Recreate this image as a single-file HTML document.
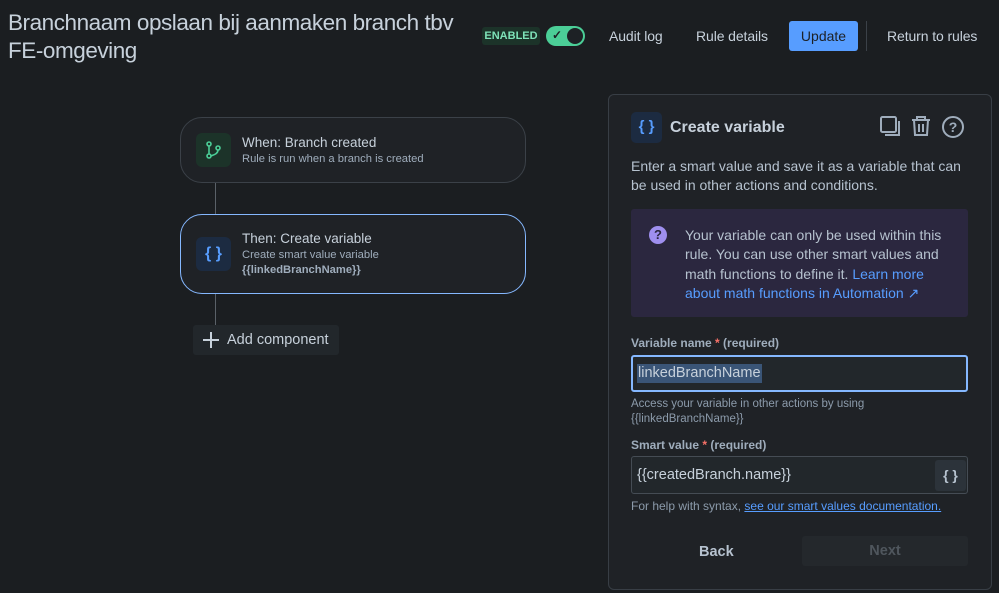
<!DOCTYPE html>
<html><head><style>
*{margin:0;padding:0;box-sizing:border-box}
body{width:999px;height:593px;background:#1b1e21;font-family:"Liberation Sans",sans-serif;color:#c7d1db;position:relative;overflow:hidden}
.a{position:absolute}
.title{left:8px;top:9px;font-size:22.5px;letter-spacing:-0.45px;line-height:28px;color:#c7d1db;width:475px}
.nav{font-size:14px;color:#c7d1db;top:28px;letter-spacing:-0.1px}
.card{background:#1f2226;border:1px solid #3b4148;border-radius:22px}
.t1{font-size:13.5px;color:#c7d1db}
.t2{font-size:11.2px;color:#9fadbc}
.lbl{font-size:12px;font-weight:bold;color:#9fadbc}
.req{color:#f87168}
</style></head><body>
<div class="a title">Branchnaam opslaan bij aanmaken branch tbv FE-omgeving</div>
<div class="a" style="left:482px;top:27px;width:58px;height:18px;background:#1c3329;border-radius:3px;color:#7ee2b8;font-size:11px;font-weight:bold;line-height:18px;text-align:center">ENABLED</div>
<div class="a" style="left:546px;top:26px;width:39px;height:20px;background:#4bce97;border-radius:10px">
<span class="a" style="left:6px;top:2px;font-size:12px;color:#1d2125;font-weight:bold">✓</span>
<span class="a" style="left:21px;top:2px;width:16px;height:16px;border-radius:50%;background:#1d2125"></span></div>
<div class="a nav" style="left:609px">Audit log</div>
<div class="a nav" style="left:696px">Rule details</div>
<div class="a" style="left:789px;top:21px;width:69px;height:30px;background:#579dff;border-radius:3px;color:#1d2125;font-size:14px;line-height:30px;text-align:center">Update</div>
<div class="a" style="left:866px;top:21px;width:1px;height:30px;background:#3b4148"></div>
<div class="a nav" style="left:887px">Return to rules</div>

<div class="a card" style="left:180px;top:117px;width:346px;height:66px"></div>
<div class="a" style="left:196px;top:133px;width:35px;height:34px;background:#1c3329;border-radius:6px">
<svg width="35" height="34" viewBox="0 0 35 34"><g stroke="#4bce97" stroke-width="1.6" fill="none"><circle cx="13" cy="11" r="2"/><circle cx="13" cy="23" r="2"/><circle cx="22" cy="15" r="2"/><path d="M13 13v8M22 17c0 4-5 5-7 6"/></g></svg></div>
<div class="a t1" style="left:242px;top:135px">When: Branch created</div>
<div class="a t2" style="left:242px;top:153px">Rule is run when a branch is created</div>
<div class="a" style="left:215px;top:183px;width:1px;height:31px;background:#5a6168"></div>
<div class="a card" style="left:180px;top:214px;width:346px;height:80px;border:1.5px solid #85b8ff"></div>
<div class="a" style="left:196px;top:237px;width:35px;height:34px;background:#1c2b41;border-radius:6px;color:#579dff;font-size:16px;font-weight:bold;line-height:33px;text-align:center">{ }</div>
<div class="a t1" style="left:242px;top:231px">Then: Create variable</div>
<div class="a t2" style="left:242px;top:249px">Create smart value variable</div>
<div class="a t2" style="left:242px;top:264px;font-weight:bold">{{linkedBranchName}}</div>
<div class="a" style="left:215px;top:294px;width:1px;height:31px;background:#5a6168"></div>
<div class="a" style="left:193px;top:325px;width:146px;height:30px;background:#22272b;border-radius:3px;font-size:14.5px;line-height:30px;color:#c7d1db;padding-left:34px">Add component</div>
<div class="a" style="left:203px;top:339px;width:16px;height:1.6px;background:#c7d1db"></div>
<div class="a" style="left:210px;top:332px;width:1.6px;height:16px;background:#c7d1db"></div>

<div class="a" style="left:608px;top:94px;width:384px;height:496px;background:#1f2226;border:1px solid #383e45;border-radius:6px"></div>
<div class="a" style="left:631px;top:112px;width:31px;height:31px;background:#1c2b41;border-radius:5px;color:#579dff;font-size:15px;font-weight:bold;line-height:30px;text-align:center">{ }</div>
<div class="a" style="left:670px;top:119px;font-size:16px;font-weight:bold;color:#c7d1db">Create variable</div>
<svg class="a" style="left:878px;top:113px" width="90" height="28" viewBox="0 0 90 28"><g stroke="#9fadbc" stroke-width="2" fill="none"><rect x="3" y="4" width="15" height="15" rx="1.5"/><path d="M21 8v14H7"/><path d="M34 7h18M39 7V4h8v3M36 7l1 15h12l1-15M41 11v8M45 11v8"/><circle cx="75" cy="14" r="10"/></g><text x="75" y="19" font-size="14" font-weight="bold" fill="#9fadbc" text-anchor="middle" font-family="Liberation Sans">?</text></svg>
<div class="a" style="left:631px;top:157px;width:340px;font-size:14px;line-height:19px;color:#b6c2cf">Enter a smart value and save it as a variable that can be used in other actions and conditions.</div>
<div class="a" style="left:631px;top:209px;width:337px;height:108px;background:#2b273f;border-radius:3px"></div>
<div class="a" style="left:649px;top:226px;width:18px;height:18px;border-radius:50%;background:#9f8fef;color:#2b273f;font-size:13px;font-weight:bold;text-align:center;line-height:18px">?</div>
<div class="a" style="left:685px;top:226px;width:275px;font-size:14px;line-height:19.3px;color:#b6c2cf">Your variable can only be used within this rule. You can use other smart values and math functions to define it. <span style="color:#579dff">Learn more about math functions in Automation ↗</span></div>
<div class="a lbl" style="left:631px;top:336px">Variable name <span class="req">*</span> (required)</div>
<div class="a" style="left:631px;top:355px;width:337px;height:37px;border:2px solid #85b8ff;border-radius:3px;background:#22272b"></div>
<div class="a" style="left:637px;top:364px;background:#3a5577;font-size:14.5px;color:#c7d1db;padding:0 1px;line-height:19px">linkedBranchName</div>
<div class="a" style="left:631px;top:397px;font-size:11.5px;line-height:15px;color:#8c9bab">Access your variable in other actions by using<br>{{linkedBranchName}}</div>
<div class="a lbl" style="left:631px;top:438px">Smart value <span class="req">*</span> (required)</div>
<div class="a" style="left:631px;top:456px;width:337px;height:38px;border:1px solid #454c54;border-radius:3px;background:#22272b"></div>
<div class="a" style="left:637px;top:467px;font-size:14.5px;color:#c7d1db">{{createdBranch.name}}</div>
<div class="a" style="left:935px;top:460px;width:31px;height:31px;background:#2c333a;border-radius:3px;font-size:14px;font-weight:bold;text-align:center;line-height:30px;color:#b6c2cf">{ }</div>
<div class="a" style="left:631px;top:499px;font-size:12px;color:#8c9bab">For help with syntax, <span style="color:#579dff;text-decoration:underline">see our smart values documentation.</span></div>
<div class="a" style="left:699px;top:544px;font-size:14.5px;font-weight:bold;color:#b6c2cf">Back</div>
<div class="a" style="left:802px;top:536px;width:166px;height:30px;background:#24282c;border-radius:3px;font-size:14.5px;font-weight:bold;color:#4f565d;text-align:center;line-height:30px">Next</div>
</body></html>
